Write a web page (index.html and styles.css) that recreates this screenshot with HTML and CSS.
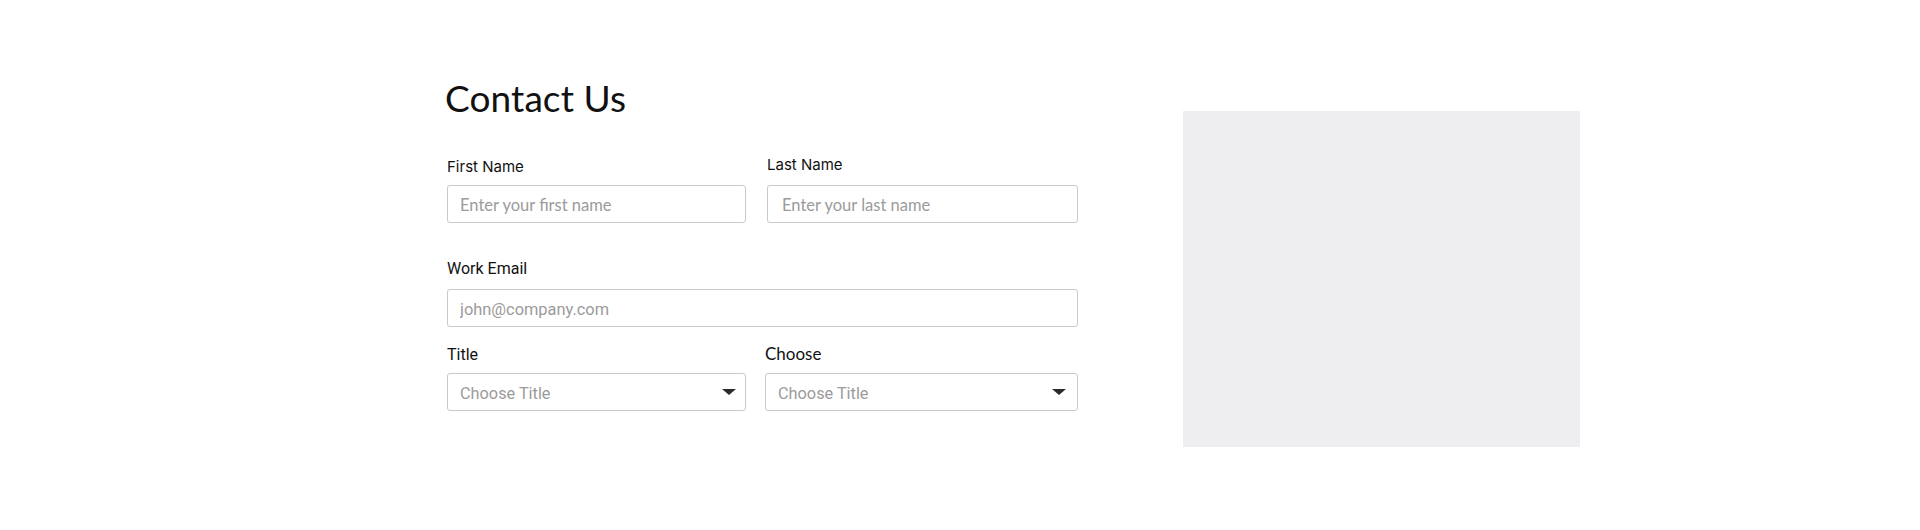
FILE: index.html
```html
<!DOCTYPE html>
<html lang="en">
<head>
<meta charset="utf-8">
<title>Contact Us</title>
<link rel="stylesheet" href="styles.css">
</head>
<body>
<main class="page">
  <form class="contact">
    <h1 class="heading">Contact Us</h1>
    <div class="row row-names">
      <div class="field">
        <label class="label label-inter" for="fn">First Name</label>
        <input class="input ph-lato" id="fn" type="text" placeholder="Enter your first name">
      </div>
      <div class="field field-last">
        <label class="label label-inter" for="ln">Last Name</label>
        <input class="input ph-lato ph-indent" id="ln" type="text" placeholder="Enter your last name">
      </div>
    </div>
    <div class="row row-email">
      <div class="field">
        <label class="label label-roboto" for="em">Work Email</label>
        <input class="input ph-roboto" id="em" type="email" placeholder="john@company.com">
      </div>
    </div>
    <div class="row row-selects">
      <div class="field">
        <label class="label label-roboto" for="ti">Title</label>
        <div class="select-wrap">
          <select class="select" id="ti"><option>Choose Title</option></select>
          <svg class="caret" width="14" height="6" viewBox="0 0 14 6"><path d="M0 0H14L7 6Z" fill="#2b2b2b"/></svg>
        </div>
      </div>
      <div class="field field-choose">
        <label class="label label-lato" for="ch">Choose</label>
        <div class="select-wrap">
          <select class="select" id="ch"><option>Choose Title</option></select>
          <svg class="caret" width="14" height="6" viewBox="0 0 14 6"><path d="M0 0H14L7 6Z" fill="#2b2b2b"/></svg>
        </div>
      </div>
    </div>
  </form>
  <aside class="media"></aside>
</main>
</body>
</html>
```

FILE: styles.css
```css
* { box-sizing: border-box; }
html, body { margin: 0; padding: 0; background: #fff; }
body { font-family: "Inter", "Liberation Sans", sans-serif; color: #111; }

.page {
  display: flex;
  align-items: flex-start;
  padding: 76px 0 0 445px;
  gap: 105px;
}

.contact {
  width: 633px;
  display: flex;
  flex-direction: column;
}

.heading {
  margin: 0;
  font-family: "Lato", sans-serif;
  font-weight: 400;
  font-size: 37px;
  line-height: 44px;
  color: #111;
  letter-spacing: 0.1px;
}

.row {
  display: grid;
  grid-template-columns: 299px 1fr;
  column-gap: 21px;
  padding-left: 2px;
}
.row-names { margin-top: 37px; }
.row-email { grid-template-columns: 1fr; margin-top: 36px; }
.row-selects { margin-top: 18px; column-gap: 19px; }

.field { display: flex; flex-direction: column; }
.field-last .label { margin-top: -2px; margin-bottom: 10px; }
.field-choose .label { margin-top: -1px; margin-bottom: 9px; }
.row-email .label { margin-bottom: 10px; }

.label {
  font-size: 15px;
  line-height: 20px;
  color: #111;
  margin-bottom: 8px;
}
.label-inter { font-family: "Inter", sans-serif; }
.label-roboto { font-family: "Roboto", sans-serif; font-size: 16px; }
.label-lato { font-family: "Lato", sans-serif; font-size: 17px; }

.input, .select {
  width: 100%;
  height: 38px;
  border: 1px solid #c9c9c9;
  border-radius: 3px;
  background: #fff;
  padding: 2px 12px 0;
  font-size: 16px;
  color: #333;
  outline: none;
}
.ph-lato { font-family: "Lato", sans-serif; font-size: 16.5px; }
.ph-roboto { font-family: "Roboto", sans-serif; font-size: 16.4px; }
.ph-indent { padding-left: 14px; }
.input::placeholder { color: #9b9b9b; opacity: 1; }

.select-wrap { position: relative; }
.select {
  appearance: none;
  -webkit-appearance: none;
  font-family: "Roboto", sans-serif;
  font-size: 16.3px;
  color: #9b9b9b;
}
.caret {
  position: absolute;
  right: 10px;
  top: 16px;
  pointer-events: none;
}
.field-choose .caret { right: 12px; }

.media {
  width: 397px;
  height: 336px;
  margin-top: 35px;
  background: #eeeef0;
}
```
